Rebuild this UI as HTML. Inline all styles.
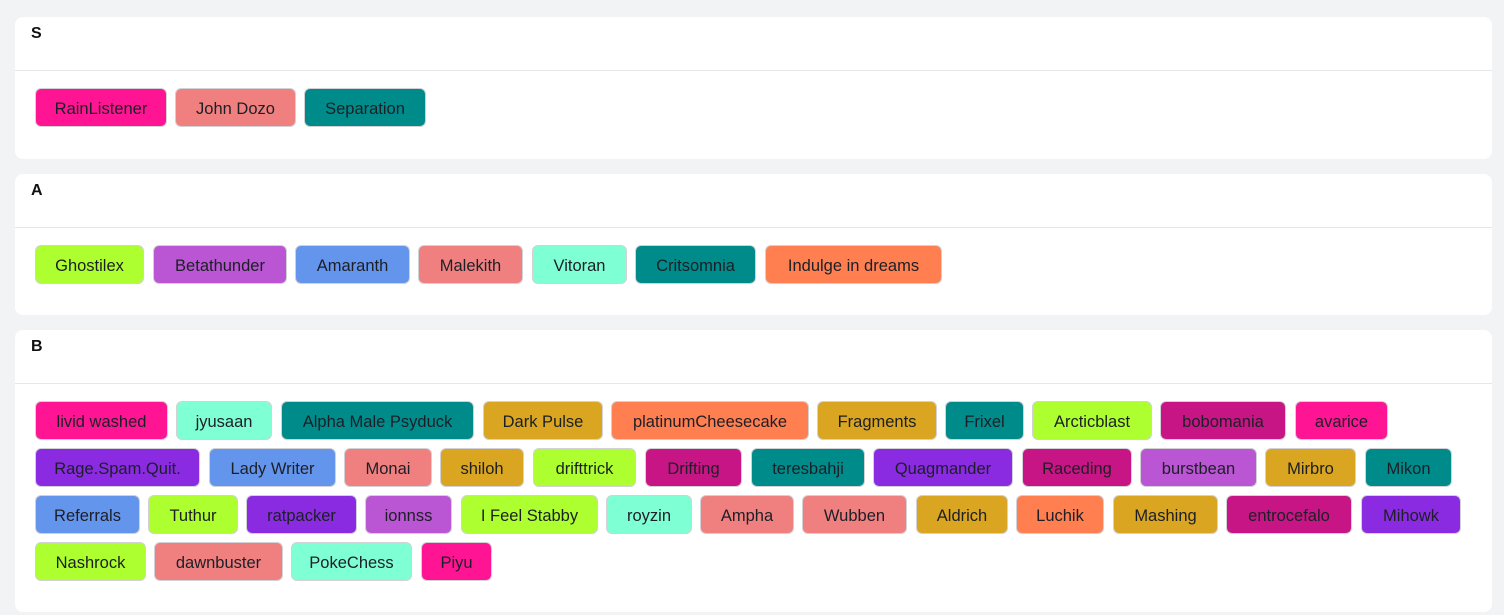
<!DOCTYPE html>
<html><head><meta charset="utf-8"><style>
html,body{margin:0;padding:0;background:#f2f3f5;width:1504px;height:615px;overflow:hidden;font-family:"Liberation Sans",sans-serif;}
.card{position:absolute;left:15px;width:1477px;background:#fff;border-radius:8px;}
.hd{position:absolute;left:0;right:0;top:0;height:53px;border-bottom:1px solid #e6e7ea;}
.hd span{position:absolute;left:16px;top:8px;font-size:16px;color:#111;font-weight:bold;}
.b{position:absolute;height:37px;line-height:41px;border:1px solid #d2d2d6;border-radius:6px;text-align:center;font-size:16.5px;color:#1c1f26;white-space:nowrap;}
</style></head><body>
<div class="card" style="top:17px;height:142px"><div class="hd"><span>S</span></div></div>
<div class="card" style="top:174px;height:141px"><div class="hd"><span>A</span></div></div>
<div class="card" style="top:330px;height:282px"><div class="hd"><span>B</span></div></div>
<div id="btns"></div>
<script>
var rows=[
[89,[["RainListener",35,166,"#ff1493"],["John Dozo",175,295,"#f08080"],["Separation",304,425,"#008b8b"]]],
[246,[["Ghostilex",35,143,"#adff2f"],["Betathunder",153,286,"#ba55d3"],["Amaranth",295,409,"#6495ed"],["Malekith",418,522,"#f08080"],["Vitoran",532,626,"#7fffd4"],["Critsomnia",635,755,"#008b8b"],["Indulge in dreams",765,941,"#ff7f50"]]],
[402,[["livid washed",35,167,"#ff1493"],["jyusaan",176,271,"#7fffd4"],["Alpha Male Psyduck",281,473,"#008b8b"],["Dark Pulse",483,602,"#daa520"],["platinumCheesecake",611,808,"#ff7f50"],["Fragments",817,936,"#daa520"],["Frixel",945,1023,"#008b8b"],["Arcticblast",1032,1151,"#adff2f"],["bobomania",1160,1285,"#c71585"],["avarice",1295,1387,"#ff1493"]]],
[449,[["Rage.Spam.Quit.",35,199,"#8a2be2"],["Lady Writer",209,335,"#6495ed"],["Monai",344,431,"#f08080"],["shiloh",440,523,"#daa520"],["drifttrick",533,635,"#adff2f"],["Drifting",645,741,"#c71585"],["teresbahji",751,864,"#008b8b"],["Quagmander",873,1012,"#8a2be2"],["Raceding",1022,1131,"#c71585"],["burstbean",1140,1256,"#ba55d3"],["Mirbro",1265,1355,"#daa520"],["Mikon",1365,1451,"#008b8b"]]],
[496,[["Referrals",35,139,"#6495ed"],["Tuthur",148,237,"#adff2f"],["ratpacker",246,356,"#8a2be2"],["ionnss",365,451,"#ba55d3"],["I Feel Stabby",461,597,"#adff2f"],["royzin",606,691,"#7fffd4"],["Ampha",700,793,"#f08080"],["Wubben",802,906,"#f08080"],["Aldrich",916,1007,"#daa520"],["Luchik",1016,1103,"#ff7f50"],["Mashing",1113,1217,"#daa520"],["entrocefalo",1226,1351,"#c71585"],["Mihowk",1361,1460,"#8a2be2"]]],
[543,[["Nashrock",35,145,"#adff2f"],["dawnbuster",154,282,"#f08080"],["PokeChess",291,411,"#7fffd4"],["Piyu",421,491,"#ff1493"]]]];
var h="";rows.forEach(function(r){r[1].forEach(function(b){h+='<div class="b" style="top:'+(r[0]-1)+'px;left:'+b[1]+'px;width:'+(b[2]-b[1]-1)+'px;background:'+b[3]+'">'+b[0]+'</div>';});});
document.getElementById("btns").innerHTML=h;
</script>
</body></html>
